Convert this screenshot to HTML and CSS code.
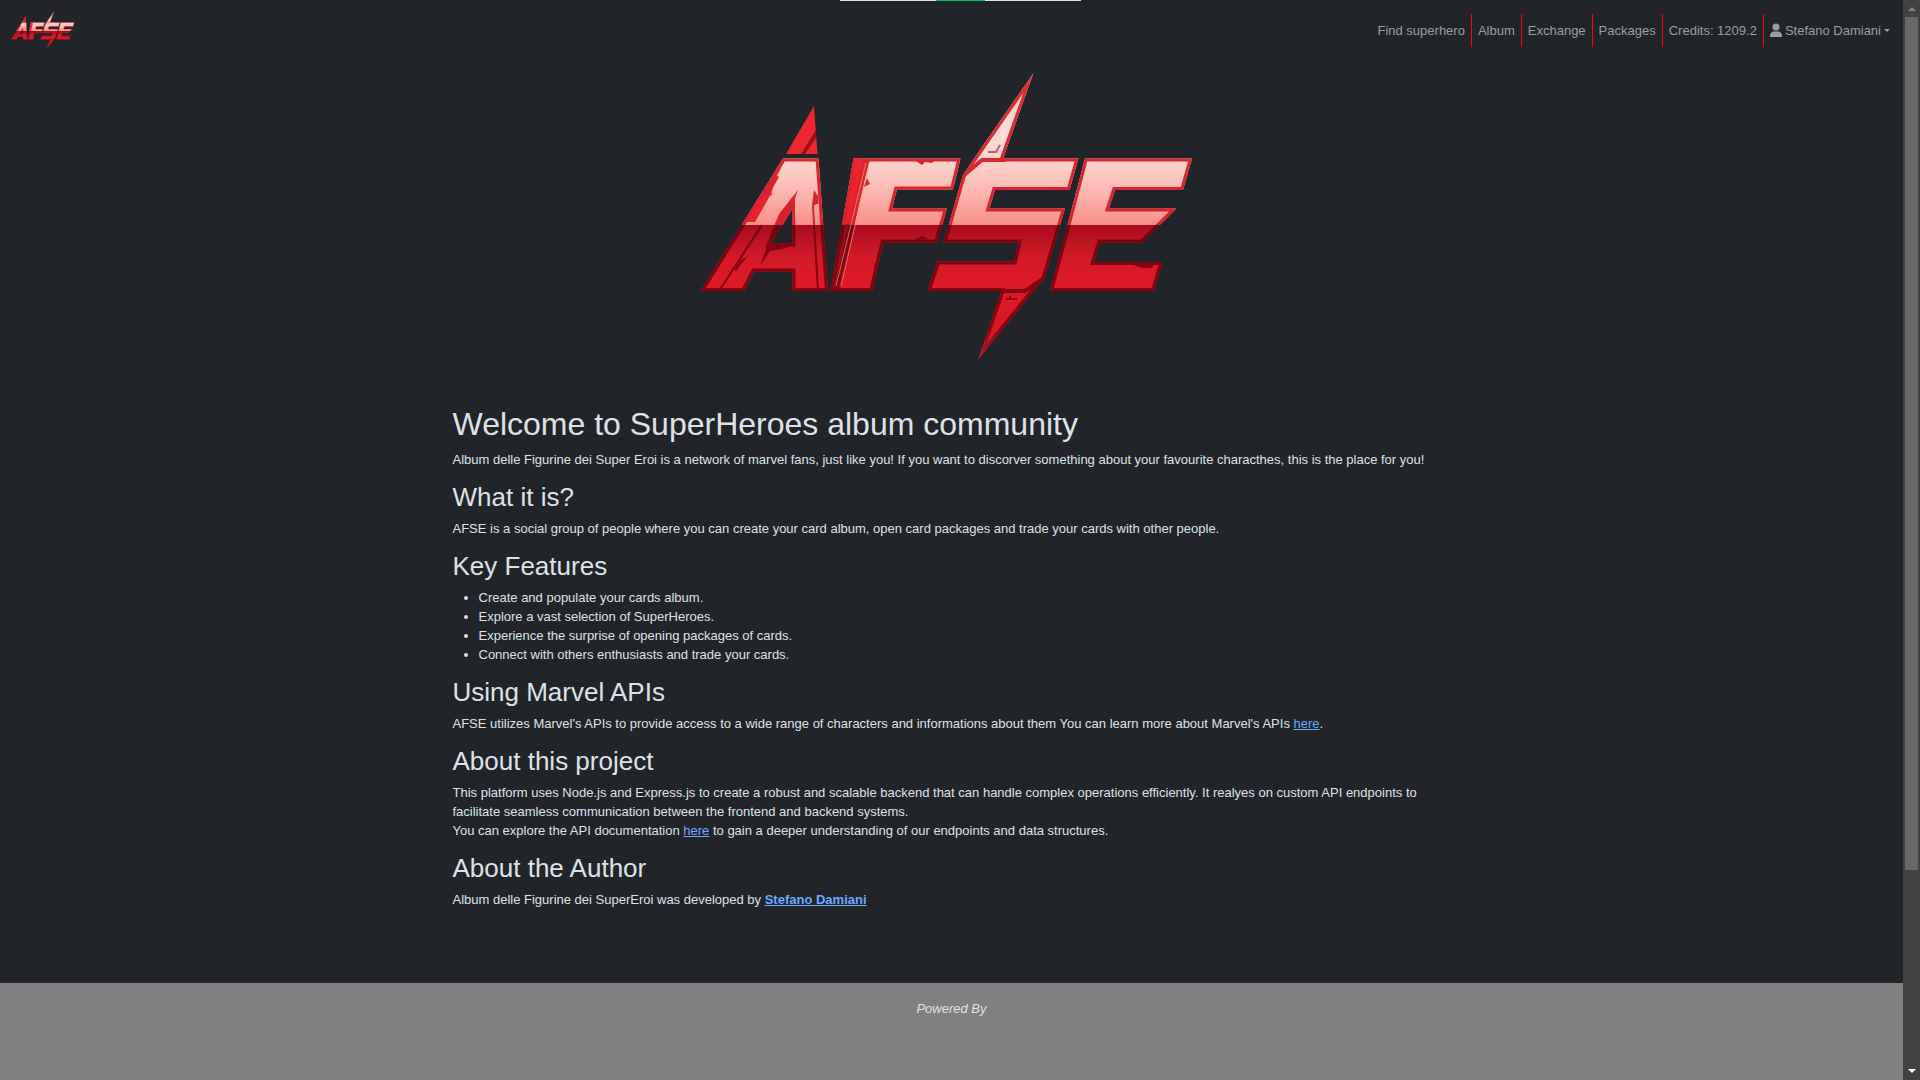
FILE: index.html
```html
<!DOCTYPE html>
<html lang="en">
<head>
<meta charset="utf-8">
<title>AFSE</title>
<link rel="stylesheet" href="styles.css">
</head>
<body>
<svg class="defs" width="0" height="0" aria-hidden="true">
  <defs>
    <linearGradient id="fill" gradientUnits="userSpaceOnUse" x1="0" y1="72" x2="0" y2="360">
      <stop offset="0" stop-color="#fbc4bc"/><stop offset=".2" stop-color="#fcdcd5"/><stop offset=".32" stop-color="#fad2cc"/><stop offset=".42" stop-color="#fbb6ae"/><stop offset=".53" stop-color="#f88f88"/>
      <stop offset=".53" stop-color="#a80c1b"/><stop offset=".64" stop-color="#d11a28"/><stop offset=".75" stop-color="#e01a27"/><stop offset="1" stop-color="#d01422"/>
    </linearGradient>
    <linearGradient id="edge" gradientUnits="userSpaceOnUse" x1="0" y1="72" x2="0" y2="360">
      <stop offset="0" stop-color="#dc3036"/><stop offset=".53" stop-color="#d8202c"/>
      <stop offset=".53" stop-color="#640710"/><stop offset=".6" stop-color="#82030f"/><stop offset=".9" stop-color="#8a0511"/><stop offset="1" stop-color="#b3202a"/>
    </linearGradient>
    <linearGradient id="band" gradientUnits="userSpaceOnUse" x1="0" y1="158" x2="0" y2="292">
      <stop offset="0" stop-color="#f3242f"/><stop offset=".49" stop-color="#e8202b"/><stop offset=".5" stop-color="#85101a"/><stop offset="1" stop-color="#b01220"/>
    </linearGradient>
    <clipPath id="outline">
      <path clip-rule="evenodd" d="M783 158.500H818.500L828 291H792.500V271.500H754L744 291H700.500ZM792 209.500L792.500 243.500H771ZM853.500 158.500H960.500L953 189.500H897L892 208.500H947L937 242.500H883.500L872 291H830.500ZM1033.500 73L1003 158.500H1078.500L1069.500 190H995L989.500 208.500H1065L1044.500 278.500L1033.500 291L978 359.500L1001.500 291H927.500L937.500 261.500H1014L1018.500 242.500H943.500L963 175L973 160ZM1085 158.500H1192L1183 190H1115L1109 208.500H1176.500L1142 242.500H1100L1094 262H1162.500L1154 291H1050Z"/>
    </clipPath>
    <symbol id="logo" viewBox="700 72 504 289">
      <path fill="#ed2630" d="M814 106L817.500 154H786Z"/>
      <path fill="#9c0e1c" d="M816 130L801 154H805L816.500 137Z"/>
      <g clip-path="url(#outline)">
        <path fill="url(#fill)" d="M700 72H1194V361H700Z"/>
        <path fill="url(#band)" d="M853 158H869L840 292H830ZM783 158L743 222H755L771 194L776 178L786 158Z"/>
        <path fill="none" stroke="url(#edge)" stroke-width="2" d="M818 199L813 206L818 291M762 225L719 291M869 158L837 291M864 160L835 291"/>
        <path fill="none" stroke="#f0a080" stroke-width="1" opacity=".65" d="M866 163L836 286M870 161L841 286"/>
        <path fill="none" stroke="url(#edge)" stroke-width="4" d="M963 176L982 160H1006M1001 291H1025L1046 277"/>
        <path fill="url(#edge)" d="M798 190L791 210L766 246L779 214ZM765 246H792L782 249L770 251L760 266L766 249ZM775 174L779 177L771 191L772 195L763 197L757 204L763 190ZM914 160H935L932 163L925 162L922 165ZM814 190L818 196V204L812 205ZM872 260L875 264L880 261L875 266ZM914 240L922 236L928 239ZM741 260L748 256L742 263L736 271L734 269ZM867 178L870 184L864 187ZM1130 264H1154L1152 268L1143 268ZM850 180L857 174L853 186Z"/>
        <path fill="none" stroke="#b8606a" stroke-width="2" d="M988 152H996L1000 145"/>
        <path fill="none" stroke="#8a0511" stroke-width="2" d="M1006 299H1017M1010 296V300"/>
        <path fill="none" stroke="url(#edge)" stroke-width="6" d="M783 158.500H818.500L828 291H792.500V271.500H754L744 291H700.500ZM792 209.500L792.500 243.500H771ZM853.500 158.500H960.500L953 189.500H897L892 208.500H947L937 242.500H883.500L872 291H830.500ZM1033.500 73L1003 158.500H1078.500L1069.500 190H995L989.500 208.500H1065L1044.500 278.500L1033.500 291L978 359.500L1001.500 291H927.500L937.500 261.500H1014L1018.500 242.500H943.500L963 175L973 160ZM1085 158.500H1192L1183 190H1115L1109 208.500H1176.500L1142 242.500H1100L1094 262H1162.500L1154 291H1050Z"/>
      </g>
    </symbol>
  </defs>
</svg>

<div class="notch" aria-hidden="true"></div>

<div class="shell">
  <div class="page">
    <nav class="navbar">
      <a class="brand" href="#" aria-label="AFSE"><svg class="brand-logo"><use href="#logo"/></svg></a>
      <ul class="nav">
        <li><a href="#">Find superhero</a></li>
        <li><a href="#">Album</a></li>
        <li><a href="#">Exchange</a></li>
        <li><a href="#">Packages</a></li>
        <li><a href="#">Credits: 1209.2</a></li>
        <li><button class="account" type="button"><svg class="user" viewBox="0 0 12 14" aria-hidden="true"><circle cx="6" cy="4" r="3.600"/><path d="M0 14V12.500C0 10 2 8.600 4 8.600H8C10 8.600 12 10 12 12.500V14Z"/></svg>Stefano Damiani<span class="caret"></span></button></li>
      </ul>
    </nav>

    <main class="content">
      <svg class="hero" role="img" aria-label="AFSE"><use href="#logo"/></svg>
      <h1>Welcome to SuperHeroes album community</h1>
      <p>Album delle Figurine dei Super Eroi is a network of marvel fans, just like you! If you want to discorver something about your favourite characthes, this is the place for you!</p>
      <h2>What it is?</h2>
      <p>AFSE is a social group of people where you can create your card album, open card packages and trade your cards with other people.</p>
      <h2>Key Features</h2>
      <ul class="features">
        <li>Create and populate your cards album.</li>
        <li>Explore a vast selection of SuperHeroes.</li>
        <li>Experience the surprise of opening packages of cards.</li>
        <li>Connect with others enthusiasts and trade your cards.</li>
      </ul>
      <h2>Using Marvel APIs</h2>
      <p>AFSE utilizes Marvel's APIs to provide access to a wide range of characters and informations about them You can learn more about Marvel's APIs <a href="#">here</a>.</p>
      <h2>About this project</h2>
      <p>This platform uses Node.js and Express.js to create a robust and scalable backend that can handle complex operations efficiently. It realyes on custom API endpoints to facilitate seamless communication between the frontend and backend systems.<br>You can explore the API documentation <a href="#">here</a> to gain a deeper understanding of our endpoints and data structures.</p>
      <h2>About the Author</h2>
      <p>Album delle Figurine dei SuperEroi was developed by <a class="author" href="#">Stefano Damiani</a></p>
    </main>

    <footer class="footer"><em>Powered By</em></footer>
  </div>

  <div class="scrollbar" aria-hidden="true">
    <span class="arrow up"></span>
    <span class="thumb"></span>
    <span class="arrow down"></span>
  </div>
</div>
</body>
</html>
```

FILE: styles.css
```css
* {
  box-sizing: border-box;
}

body {
  margin: 0;
  background: #212529;
  color: #dee2e6;
  font: 13px/19px "Liberation Sans", Arial, sans-serif;
}

.defs {
  position: absolute;
}

.notch {
  position: absolute;
  top: 0;
  left: 50%;
  width: 241px;
  height: 1px;
  margin-left: -120px;
  background: linear-gradient(90deg, #dee2e0 40%, #00c060 40% 60%, #dee2e0 60%);
}

.shell {
  display: flex;
  min-height: 100vh;
}

.page {
  flex: 1;
  display: flex;
  flex-direction: column;
}

.navbar {
  display: flex;
  align-items: center;
  justify-content: space-between;
  padding: 11px 7px 13px 11px;
}

.brand,
.brand-logo {
  display: block;
  width: 65px;
  height: 38px;
}

.nav {
  display: flex;
  margin: 0;
  padding: 0;
  list-style: none;
}

.nav li + li {
  border-left: 1px solid #ff0018;
}

.nav a,
.account {
  display: flex;
  align-items: center;
  padding: 7px 6px;
  border: 0;
  background: none;
  color: #9b9d9f;
  font: inherit;
  text-decoration: none;
}

.user {
  width: 12px;
  height: 14px;
  margin-right: 3px;
  fill: currentColor;
}

.caret {
  margin-left: 3px;
  border: 3px solid transparent;
  border-top-color: currentColor;
  border-bottom: 0;
}

.content {
  width: 100%;
  max-width: 998px;
  margin: 0 auto;
  padding: 10px 0 61px;
}

.hero {
  display: block;
  width: 504px;
  height: 289px;
  margin: 0 auto 44px;
}

h1,
h2 {
  margin: 0 0 6px;
  font-weight: 400;
}

h1 {
  font-size: 32px;
  line-height: 39px;
}

h2 {
  font-size: 26px;
  line-height: 31px;
}

p,
.features {
  margin: 0 0 13px;
}

.features {
  padding-left: 26px;
}

.content a {
  color: #6ea8fe;
}

.author {
  font-weight: 700;
}

.footer {
  flex: 1;
  padding: 16px;
  background: #808080;
  text-align: center;
}

.scrollbar {
  display: flex;
  flex-direction: column;
  align-items: center;
  width: 17px;
  padding: 7px 2px;
  background: #424242;
}

.thumb {
  width: 13px;
  height: 80%;
  margin-top: 6px;
  background: #686868;
}

.arrow {
  border: 4px solid transparent;
}

.up {
  border-top: 0;
  border-bottom-color: #868686;
}

.down {
  margin-top: auto;
  border-bottom: 0;
  border-top-color: #fff;
}
```
